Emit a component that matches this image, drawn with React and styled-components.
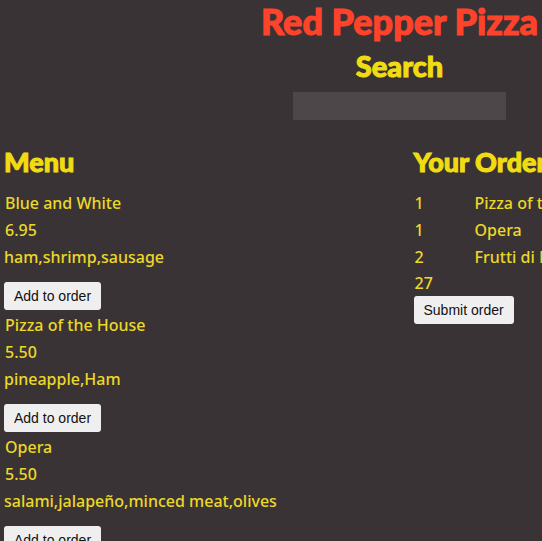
import React from "react";
import styled, { createGlobalStyle } from "styled-components";

const GlobalStyle = createGlobalStyle`
  *, *::before, *::after { box-sizing: border-box; }
  html { overflow: hidden; background: #3a3336; }
  body {
    margin: 0;
    background: #3a3336;
    color: #ecd827;
    font: 500 16px/27px "Noto Sans", sans-serif;
  }
`;

const Page = styled.div`
  min-width: 799px;
  padding: 0 4px;
`;

const Header = styled.header`
  display: flex;
  flex-direction: column;
  align-items: center;
`;

const Title = styled.h1`
  margin: 0;
  color: #ff432a;
  font: 900 36px/42px Lato, sans-serif;
  -webkit-text-stroke: 1px currentColor;
`;

const Heading = styled.h2`
  margin: 0;
  color: #f1dc12;
  font: 900 ${({ $large }) => ($large ? "29px" : "27px")}/48px Lato, sans-serif;
  -webkit-text-stroke: 1px currentColor;
`;

const SearchHeading = styled(Heading)`
  padding-bottom: 2px;
`;

const SearchLabel = styled.label`
  display: block;
`;

const SearchInput = styled.input`
  width: 213px;
  height: 28px;
  padding: 4px 8px;
  border: 0;
  border-radius: 0;
  background: #4d474a;
  color: inherit;
  font: inherit;
`;

const Columns = styled.main`
  display: grid;
  grid-template-columns: 1fr 1fr;
  column-gap: 28px;
  padding-top: 18px;
`;

const Panel = styled.section`
  min-width: 0;
`;

const MenuList = styled.ul`
  display: grid;
  gap: 2px;
  margin: 0;
  padding: 4px 0 0;
  list-style: none;
`;

const Line = styled.div`
  padding-left: 1px;
`;

const Ingredients = styled.p`
  margin: 0 0 12px;
  line-height: 26px;
`;

const Button = styled.button`
  display: block;
  height: 28px;
  padding: 0 10px;
  border: 0;
  border-radius: 3px;
  background: #f0eff0;
  color: #111;
  font: 14px/28px "Liberation Sans", Arial, sans-serif;
  white-space: nowrap;
`;

const OrderTable = styled.table`
  width: 100%;
  margin-top: 4px;
  border-collapse: collapse;
`;

const Cell = styled.td`
  width: ${({ $narrow }) => ($narrow ? "60px" : "auto")};
  padding: 0 0 0 1px;
  white-space: nowrap;
`;

const Total = styled(Line)`
  line-height: 25px;
`;

const pizzas = [
  { name: "Blue and White", price: "6.95", ingredients: ["ham", "shrimp", "sausage"] },
  { name: "Pizza of the House", price: "5.50", ingredients: ["pineapple", "Ham"] },
  { name: "Opera", price: "5.50", ingredients: ["salami", "jalapeño", "minced meat", "olives"] },
];

const order = [
  { count: 1, name: "Pizza of the House" },
  { count: 1, name: "Opera" },
  { count: 2, name: "Frutti di Mare" },
];

export default function App() {
  return (
    <>
      <GlobalStyle />
      <Page>
        <Header>
          <Title>Red Pepper Pizza</Title>
          <SearchHeading $large>
            <SearchLabel htmlFor="search">Search</SearchLabel>
          </SearchHeading>
          <SearchInput id="search" type="text" />
        </Header>
        <Columns>
          <Panel>
            <Heading>Menu</Heading>
            <MenuList>
              {pizzas.map((pizza) => (
                <li key={pizza.name}>
                  <Line>{pizza.name}</Line>
                  <Line>{pizza.price}</Line>
                  <Ingredients>{pizza.ingredients.join(",")}</Ingredients>
                  <Button type="button">Add to order</Button>
                </li>
              ))}
            </MenuList>
          </Panel>
          <Panel>
            <Heading>Your Order</Heading>
            <OrderTable>
              <tbody>
                {order.map((item) => (
                  <tr key={item.name}>
                    <Cell $narrow>{item.count}</Cell>
                    <Cell>{item.name}</Cell>
                  </tr>
                ))}
              </tbody>
            </OrderTable>
            <Total>27</Total>
            <Button type="button">Submit order</Button>
          </Panel>
        </Columns>
      </Page>
    </>
  );
}
